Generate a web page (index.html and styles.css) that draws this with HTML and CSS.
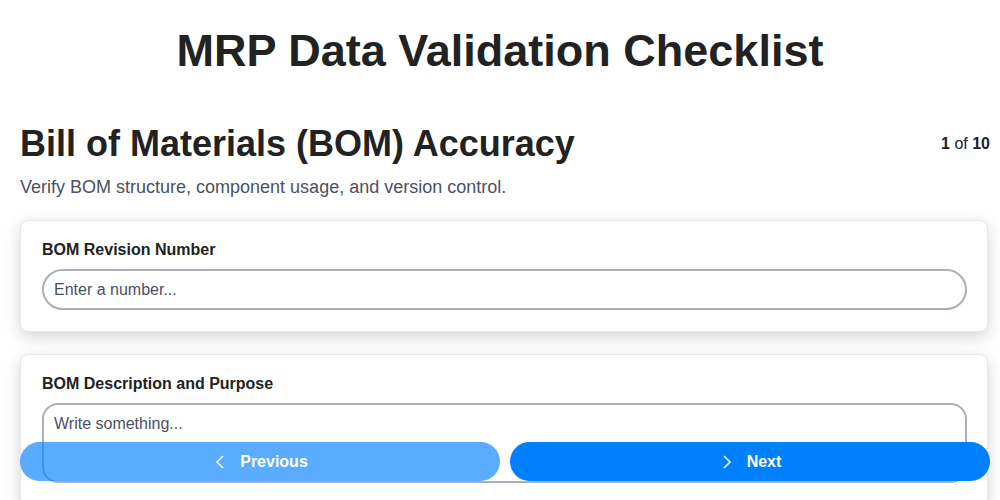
FILE: index.html
```html
<!DOCTYPE html>
<html lang="en">
<head>
  <meta charset="UTF-8" />
  <title>MRP Data Validation Checklist</title>
  <link rel="stylesheet" href="styles.css">
</head>
<body>

<h1 class="page-title">MRP Data Validation Checklist</h1>

<div class="section">
  <div class="section-head">
    <h2>Bill of Materials (BOM) Accuracy</h2>
    <div class="counter"><b>1</b> of <b>10</b></div>
  </div>
  <p class="section-desc">Verify BOM structure, component usage, and version control.</p>

  <div class="card">
    <label for="rev">BOM Revision Number</label>
    <input type="text" id="rev" placeholder="Enter a number...">
  </div>

  <div class="card">
    <label for="desc">BOM Description and Purpose</label>
    <textarea id="desc" placeholder="Write something..."></textarea>
  </div>
</div>

<div class="nav-bar">
  <button class="nav-btn prev">
    <svg width="16" height="16" viewBox="0 0 16 16"><path d="M11 2 L5 8 L11 14" fill="none" stroke="currentColor" stroke-width="1.5"/></svg>
    Previous
  </button>
  <button class="nav-btn next">
    <svg width="16" height="16" viewBox="0 0 16 16"><path d="M5 2 L11 8 L5 14" fill="none" stroke="currentColor" stroke-width="1.5"/></svg>
    Next
  </button>
</div>

</body>
</html>
```

FILE: styles.css
```css
body {
  font-family: "Liberation Sans", Arial, sans-serif;
  background-color: #fff;
  color: #222;
  margin: 0;
  padding: 0 10px;
}

.page-title {
  text-align: center;
  font-size: 45px;
  margin: 25px 0 46px;
  color: #222;
}

.section {
  padding-left: 10px;
}

.section-head {
  display: flex;
  justify-content: space-between;
  align-items: flex-start;
}

.section-head h2 {
  font-size: 36px;
  margin: 0;
  line-height: 42px;
}

.counter {
  font-size: 16px;
  margin-top: 12px;
}

.section-desc {
  font-size: 18px;
  color: #4a5163;
  margin: 12px 0 22px;
}

.card {
  background: #fff;
  border: 1px solid #e4e6ea;
  border-radius: 8px;
  padding: 20px 20px 21px 21px;
  margin: 0 2px 22px 0;
  box-shadow: 0 5px 16px rgba(0,0,0,0.17);
}

.card label {
  display: block;
  font-weight: bold;
  font-size: 16px;
  margin-bottom: 10px;
}

.card input,
.card textarea {
  width: 100%;
  box-sizing: border-box;
  border: 2px solid #a9b0b9;
  font-family: inherit;
  font-size: 16px;
  padding: 9px 10px;
  color: #222;
}

.card input {
  border-radius: 21px;
  height: 41px;
}

.card textarea {
  border-radius: 16px;
  height: 80px;
  resize: none;
  padding-top: 10px;
}

.card input::placeholder,
.card textarea::placeholder {
  color: #4a5163;
}

.nav-bar {
  position: fixed;
  left: 20px;
  right: 10px;
  bottom: 19px;
  display: flex;
  gap: 10px;
}

.nav-btn {
  flex: 1;
  height: 39px;
  border: none;
  border-radius: 20px;
  color: white;
  font-family: inherit;
  font-size: 16px;
  font-weight: bold;
  display: flex;
  align-items: center;
  justify-content: center;
  gap: 12px;
  cursor: pointer;
}

.nav-btn.prev {
  background-color: #0080ff;
  opacity: 0.65;
}

.nav-btn.next {
  background-color: #0080ff;
}
```
